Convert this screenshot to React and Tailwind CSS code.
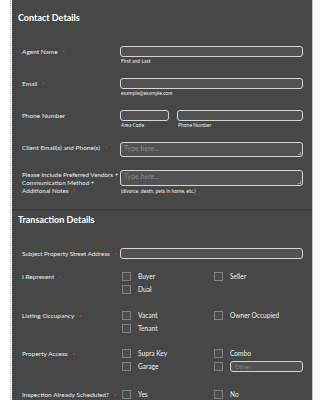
import React from 'react';

const font = { fontFamily: 'Lato, "Open Sans", sans-serif' };

const Req = () => (
  <span className="inline-block align-middle text-[8px] leading-[8px] text-[#d23232] ml-[4px] translate-y-[1px]">*</span>
);

const Input = ({ className = '', placeholder }) => (
  <div className={`h-[11px] rounded-[3px] border border-[#d4d4d4] bg-[#525252] text-[6px] leading-[9px] text-[#858585] pl-[4px] ${className}`}>
    {placeholder}
  </div>
);

const TextArea = ({ h = 'h-[15px]' }) => (
  <div className={`relative ${h} rounded-[3px] border border-[#d4d4d4] bg-[#525252] text-[7px] leading-[11px] text-[#8a8a8a] pl-[3px]`}>
    Type here...
    <span className="absolute right-[1px] bottom-[1px] w-[3px] h-[3px] border-r border-b border-[#999]" />
  </div>
);

const Sub = ({ children }) => (
  <div className="text-[5px] leading-[8px] text-[#ececec] pl-[1px] whitespace-nowrap">{children}</div>
);

const Row = ({ label, required, mt, lead = 'leading-[11px]', size = 'text-[6.5px]', children }) => (
  <div className={`flex ${mt}`}>
    <div className={`w-[98px] shrink-0 ${size} ${lead} text-[#ececec] whitespace-nowrap`}>
      {label}
      {required && <Req />}
    </div>
    <div className="flex-1">{children}</div>
  </div>
);

const Check = ({ label, children }) => (
  <div className="flex items-center h-[9px]">
    <span className="w-[9px] h-[9px] border border-[#808080] bg-[#4d4d4d] shrink-0" />
    {label && <span className="ml-[7px] text-[6.6px] text-[#efefef]">{label}</span>}
    {children}
  </div>
);

const Options = ({ rows }) => (
  <div className="grid grid-cols-[92px_1fr] gap-y-[4px] pl-[2px]">
    {rows.map((r, i) => (
      <React.Fragment key={i}>
        {r.map((c, j) => (
          <div key={j}>{c}</div>
        ))}
      </React.Fragment>
    ))}
  </div>
);

export default function App() {
  return (
    <div style={font} className="flex w-[325px] h-[400px] bg-white overflow-hidden">
      <div className="w-[11px] shrink-0 border-r border-dotted border-[#b8b8b8]" />
      <div className="w-[301px] shrink-0 bg-[#474747] border-r border-[#c8c8c8] ml-[1px]">
        <div className="pl-[6px] pr-[9px]">
          <div className="mt-[13px] text-[9px] leading-[10px] font-bold text-white">Contact Details</div>
        </div>
        <div className="pl-[10px] pr-[9px]">
          <Row label="Agent Name" required mt="mt-[23px]">
            <Input />
            <Sub>First and Last</Sub>
          </Row>
          <Row label="Email" required mt="mt-[13px]">
            <Input />
            <Sub>example@example.com</Sub>
          </Row>
          <Row label="Phone Number" mt="mt-[13px]">
            <div className="flex gap-[8px]">
              <div className="w-[49px]">
                <Input />
                <Sub>Area Code</Sub>
              </div>
              <div className="flex-1">
                <Input />
                <Sub>Phone Number</Sub>
              </div>
            </div>
          </Row>
          <Row label="Client Email(s) and Phone(s)" required mt="mt-[13px]">
            <TextArea />
          </Row>
          <Row
            label={
              <>
                Please Include Preferred Vendors +
                <br />
                Communication Method +
                <br />
                Additional Notes
              </>
            }
            required
            mt="mt-[13px]"
            size="text-[6.3px]"
            lead="leading-[8px] pt-[1px]"
          >
            <TextArea h="h-[16px]" />
            <div className="mt-[1px]">
              <Sub>(divorce, death, pets in home, etc.)</Sub>
            </div>
          </Row>
        </div>
        <div className="mt-[14px] h-[2px] bg-[#3a3a3a]" />
        <div className="pl-[6px] pr-[9px]">
          <div className="mt-[4px] text-[9px] leading-[10px] font-bold text-white">Transaction Details</div>
        </div>
        <div className="pl-[10px] pr-[9px]">
          <Row label="Subject Property Street Address" required mt="mt-[23px]" size="text-[6.3px]">
            <Input />
          </Row>
          <Row label="I Represent" required mt="mt-[13px]" lead="leading-[9px]">
            <Options
              rows={[
                [<Check label="Buyer" />, <Check label="Seller" />],
                [<Check label="Dual" />, null],
              ]}
            />
          </Row>
          <Row label="Listing Occupancy" required mt="mt-[17px]" lead="leading-[9px]">
            <Options
              rows={[
                [<Check label="Vacant" />, <Check label="Owner Occupied" />],
                [<Check label="Tenant" />, null],
              ]}
            />
          </Row>
          <Row label="Property Access" required mt="mt-[16px]" lead="leading-[9px]">
            <Options
              rows={[
                [<Check label="Supra Key" />, <Check label="Combo" />],
                [
                  <Check label="Garage" />,
                  <Check>
                    <Input className="ml-[7px] flex-1 h-[10px] leading-[8px]" placeholder="Other" />
                  </Check>,
                ],
              ]}
            />
          </Row>
          <Row label="Inspection Already Scheduled?" required mt="mt-[19px]" lead="leading-[9px]">
            <Options rows={[[<Check label="Yes" />, <Check label="No" />]]} />
          </Row>
        </div>
      </div>
    </div>
  );
}
